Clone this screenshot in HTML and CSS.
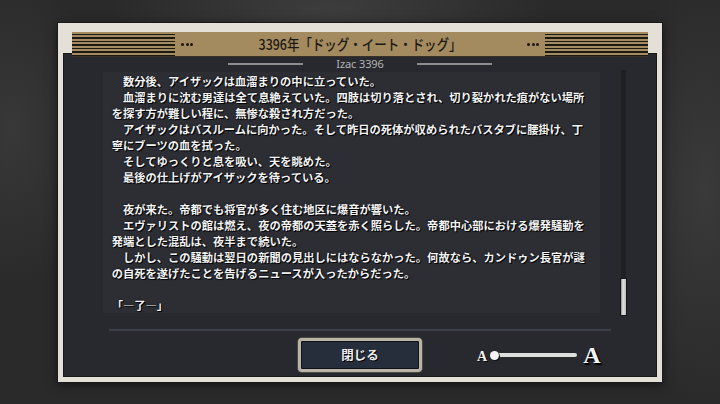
FILE: index.html
```html
<!DOCTYPE html>
<html lang="ja">
<head>
<meta charset="utf-8">
<link rel="stylesheet" href="styles.css">
</head>
<body>
<div class="stage">
  <div class="panel">
    <div class="header">
      <div class="stripes"></div>
      <div class="dots"><i></i><i></i><i></i></div>
      <div class="title"><span>3396年「ドッグ・イート・ドッグ」</span></div>
      <div class="dots"><i></i><i></i><i></i></div>
      <div class="stripes"></div>
    </div>
    <div class="body">
      <div class="subtitle"><span class="rule"></span><span class="who">Izac 3396</span><span class="rule"></span></div>
      <div class="content">
        <div class="textbox">
          <p>数分後、アイザックは血溜まりの中に立っていた。</p>
          <p>血溜まりに沈む男達は全て息絶えていた。四肢は切り落とされ、切り裂かれた痕がない場所を探す方が難しい程に、無惨な殺され方だった。</p>
          <p>アイザックはバスルームに向かった。そして昨日の死体が収められたバスタブに腰掛け、丁寧にブーツの血を拭った。</p>
          <p>そしてゆっくりと息を吸い、天を眺めた。</p>
          <p>最後の仕上げがアイザックを待っている。</p>
          <p class="blank"></p>
          <p>夜が来た。帝都でも将官が多く住む地区に爆音が響いた。</p>
          <p>エヴァリストの館は燃え、夜の帝都の天蓋を赤く照らした。帝都中心部における爆発騒動を発端とした混乱は、夜半まで続いた。</p>
          <p>しかし、この騒動は翌日の新聞の見出しにはならなかった。何故なら、カンドゥン長官が謎の自死を遂げたことを告げるニュースが入ったからだった。</p>
          <p class="blank"></p>
          <p class="noindent">「―了―」</p>
        </div>
        <div class="scrollbar"><div class="thumb"></div></div>
      </div>
      <div class="sep"></div>
      <div class="controls">
        <div></div>
        <button class="close">閉じる</button>
        <div class="slider">
          <span class="a-small">A</span>
          <div class="track"><span class="knob"></span></div>
          <span class="a-big">A</span>
        </div>
      </div>
    </div>
  </div>
</div>
</body>
</html>
```
FILE: styles.css
```css
html, body {
  margin: 0;
  padding: 0;
}
body {
  width: 720px;
  height: 404px;
  overflow: hidden;
  background:
    radial-gradient(ellipse 220px 70px at 330px 8px, #3d3d3d, rgba(61,61,61,0)),
    radial-gradient(ellipse 90px 160px at 10px 130px, #383838, rgba(56,56,56,0)),
    radial-gradient(ellipse 90px 220px at 705px 190px, #3a3a3a, rgba(58,58,58,0)),
    #2a2a2a;
}
.stage {
  height: 404px;
  box-sizing: border-box;
  padding: 23px 0 0 58px;
  display: flex;
  align-items: flex-start;
}
.panel {
  width: 604px;
  height: 359px;
  box-sizing: border-box;
  padding: 9px 5px 5px;
  background: #e4dfd7;
  display: flex;
  flex-direction: column;
  box-shadow: 0 0 0 1px #1a1a1a, 0 2px 10px rgba(0,0,0,0.6);
}
.header {
  position: relative;
  z-index: 1;
  margin: 0 9px;
  height: 24px;
  background: #a38a5f;
  display: flex;
  align-items: center;
  box-shadow: 0 1px 0 #3a3226;
}
.stripes {
  width: 103px;
  align-self: stretch;
  background: repeating-linear-gradient(to bottom, #a38a5f 0 2px, #1c1a15 2px 3.5px);
}
.dots {
  display: flex;
  gap: 1.5px;
  margin: 0 6px;
}
.dots i {
  width: 3px;
  height: 3px;
  border-radius: 50%;
  background: #1a1712;
}
.title {
  flex: 1;
  text-align: center;
  font: 500 14.5px/24px "Noto Sans CJK JP", sans-serif;
  color: #1b1813;
  white-space: nowrap;
}
.title span {
  display: inline-block;
  transform: scaleX(0.86);
}
.body {
  flex: 1;
  margin-top: -3px;
  background: #28292e;
  display: flex;
  flex-direction: column;
  box-shadow: inset 0 0 0 1px #18191c;
}
.subtitle {
  height: 19px;
  box-sizing: border-box;
  padding-top: 3px;
  display: flex;
  align-items: center;
  justify-content: center;
  gap: 33px;
}
.rule {
  width: 75px;
  height: 2px;
  background: #8e8e8e;
}
.who {
  font: 11px/16px "Noto Sans", sans-serif;
  color: #b4b4b4;
  letter-spacing: -0.1px;
}
.content {
  display: flex;
  height: 241px;
  padding-left: 40px;
}
.textbox {
  width: 497px;
  height: 241px;
  box-sizing: border-box;
  padding: 1px 0 0 8.7px;
  background: #2d2e34;
  overflow: hidden;
}
.textbox p {
  margin: 0;
  width: calc(42em + 2px);
  font: 700 11.27px/16px "Noto Sans CJK JP", sans-serif;
  color: #f4f4f4;
  text-indent: 1em;
  text-shadow: 1px 1px 0 #000, 0 0 2px #000;
}
.textbox p.blank {
  height: 16px;
}
.textbox p.noindent {
  text-indent: 0;
}
.scrollbar {
  margin-left: 21px;
  margin-top: -2px;
  width: 5px;
  height: 245px;
  background: #1f2024;
  display: flex;
  flex-direction: column;
  justify-content: flex-end;
}
.thumb {
  height: 36px;
  background: linear-gradient(to right, #8f8f8f, #e2e2e2 40%, #bdbdbd);
  box-shadow: 0 0 0 1px #151515;
}
.sep {
  margin: 16px 0 0 46px;
  width: 502px;
  height: 2px;
  background: #3b4048;
}
.controls {
  margin-top: 7px;
  height: 34px;
  display: grid;
  grid-template-columns: 1fr 124px 1fr;
}
.close {
  width: 124px;
  height: 34px;
  box-sizing: border-box;
  border: 3px solid #b9b4a6;
  border-radius: 4px;
  background: #262d3b;
  box-shadow: inset 0 0 0 1px #10131a, 0 0 0 1px #4d4a43;
  color: #eeeeee;
  font: 700 12.5px/1 "Noto Sans CJK JP", sans-serif;
  text-shadow: 1px 1px 0 #000;
  padding: 0;
}
.slider {
  padding-left: 55px;
  display: flex;
  align-items: center;
}
.a-small {
  font: 700 14px/1 "Liberation Serif", serif;
  color: #f2f2f2;
  text-shadow: 1px 1px 0 #000;
  margin-top: 3px;
}
.track {
  margin-left: 3px;
  width: 87px;
  height: 10px;
  display: flex;
  align-items: center;
  position: relative;
}
.track::before {
  content: "";
  flex: 1;
  margin-left: 4px;
  height: 4px;
  border-radius: 0 2px 2px 0;
  background: #dedede;
}
.knob {
  position: absolute;
  left: 0;
  top: 0.5px;
  width: 9px;
  height: 9px;
  border-radius: 50%;
  background: #f4f4f4;
  box-shadow: 1px 1px 0 #111;
}
.a-big {
  margin-left: 6px;
  font: 700 24px/1 "Liberation Serif", serif;
  color: #f4f4f4;
  text-shadow: 1px 1px 0 #000, 2px 2px 1px #000;
}
```
